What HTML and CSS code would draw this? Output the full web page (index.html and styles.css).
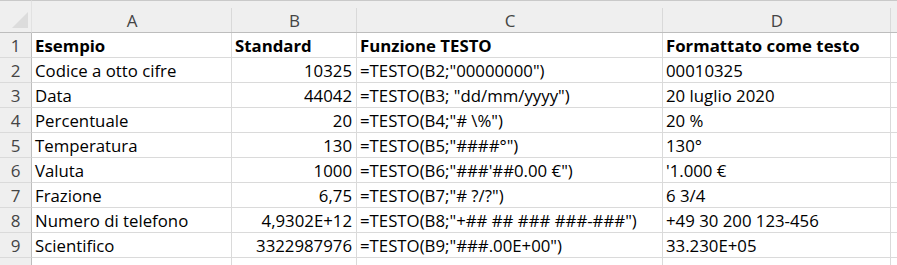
FILE: index.html
```html
<!DOCTYPE html>
<html lang="it">
<head>
<meta charset="utf-8">
<title>TESTO</title>
<link rel="stylesheet" href="styles.css">
</head>
<body>
<div class="sheet">
  <div class="corner"><svg width="32" height="32" viewBox="0 0 32 32"><polygon points="12,28 28,12 28,28" fill="#dcdcdc"/></svg></div>
  <div class="colhead">A</div>
  <div class="colhead">B</div>
  <div class="colhead">C</div>
  <div class="colhead">D</div>
  <div class="colhead end"></div>

  <div class="rowhead">1</div>
  <div class="cell b">Esempio</div>
  <div class="cell b">Standard</div>
  <div class="cell b">Funzione TESTO</div>
  <div class="cell b">Formattato come testo</div>
  <div class="cell"></div>

  <div class="rowhead">2</div>
  <div class="cell">Codice a otto cifre</div>
  <div class="cell r">10325</div>
  <div class="cell">=TESTO(B2;"00000000")</div>
  <div class="cell">00010325</div>
  <div class="cell"></div>

  <div class="rowhead">3</div>
  <div class="cell">Data</div>
  <div class="cell r">44042</div>
  <div class="cell">=TESTO(B3; "dd/mm/yyyy")</div>
  <div class="cell">20 luglio 2020</div>
  <div class="cell"></div>

  <div class="rowhead">4</div>
  <div class="cell">Percentuale</div>
  <div class="cell r">20</div>
  <div class="cell">=TESTO(B4;"# \%")</div>
  <div class="cell">20 %</div>
  <div class="cell"></div>

  <div class="rowhead">5</div>
  <div class="cell">Temperatura</div>
  <div class="cell r">130</div>
  <div class="cell">=TESTO(B5;"####°")</div>
  <div class="cell">130°</div>
  <div class="cell"></div>

  <div class="rowhead">6</div>
  <div class="cell">Valuta</div>
  <div class="cell r">1000</div>
  <div class="cell">=TESTO(B6;"###'##0.00 €")</div>
  <div class="cell">'1.000 €</div>
  <div class="cell"></div>

  <div class="rowhead">7</div>
  <div class="cell">Frazione</div>
  <div class="cell r">6,75</div>
  <div class="cell">=TESTO(B7;"# ?/?")</div>
  <div class="cell">6 3/4</div>
  <div class="cell"></div>

  <div class="rowhead">8</div>
  <div class="cell">Numero di telefono</div>
  <div class="cell r">4,9302E+12</div>
  <div class="cell">=TESTO(B8;"+## ## ### ###-###")</div>
  <div class="cell">+49 30 200 123-456</div>
  <div class="cell"></div>

  <div class="rowhead">9</div>
  <div class="cell">Scientifico</div>
  <div class="cell r">3322987976</div>
  <div class="cell">=TESTO(B9;"###.00E+00")</div>
  <div class="cell">33.230E+05</div>
  <div class="cell"></div>

  <div class="rowhead">10</div>
  <div class="cell"></div>
  <div class="cell"></div>
  <div class="cell"></div>
  <div class="cell"></div>
  <div class="cell"></div>
</div>
</body>
</html>
```
FILE: styles.css
```css
html, body {
  margin: 0;
  padding: 0;
  background: #ffffff;
  overflow: hidden;
}
.sheet {
  display: grid;
  grid-template-columns: 32px 200px 125px 306px 228px 6px;
  grid-template-rows: 33px repeat(10, 25px);
  font-family: "Open Sans", "Noto Sans", sans-serif;
  font-size: 16.8px;
  color: #000;
  width: 897px;
  height: 265px;
  overflow: hidden;
}
.corner {
  background: #efefef;
  border-top: 1px solid #c9c9c9;
  border-bottom: 1px solid #bdbdbd;
  border-right: 1px solid #e2e2e2;
  box-sizing: border-box;
  line-height: 0;
  overflow: hidden;
}
.corner svg {
  display: block;
  margin-top: -1px;
}
.colhead {
  box-sizing: border-box;
  border-top: 1px solid #c9c9c9;
  border-bottom: 1px solid #bdbdbd;
  background: linear-gradient(#d9d9d9, #d9d9d9) right bottom / 1px 24px no-repeat, #efefef;
  color: #444;
  font-size: 17px;
  display: flex;
  align-items: center;
  justify-content: center;
  padding-top: 7px;
}
.colhead.end {
  background: #efefef;
}
.rowhead {
  box-sizing: border-box;
  background: #efefef;
  border-right: 1px solid #bdbdbd;
  border-bottom: 1px solid #dadada;
  color: #444;
  font-size: 17px;
  display: flex;
  align-items: center;
  justify-content: center;
  padding-top: 1px;
}
.cell {
  box-sizing: border-box;
  border-right: 1px solid #dadada;
  border-bottom: 1px solid #dadada;
  display: flex;
  align-items: center;
  padding: 1px 4px 0 3px;
  white-space: pre;
  overflow: hidden;
}
.cell.b {
  font-weight: 700;
}
.cell.r {
  justify-content: flex-end;
}
```
